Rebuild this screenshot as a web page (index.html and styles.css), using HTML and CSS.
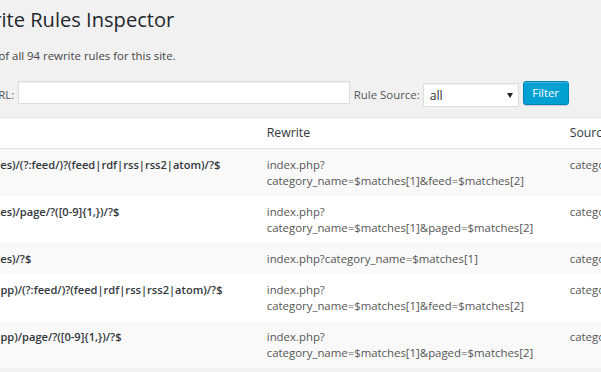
FILE: index.html
```html
<!DOCTYPE html>
<html>
<head>
<meta charset="utf-8">
<title>Rewrite Rules Inspector</title>
<link rel="stylesheet" href="styles.css">
</head>
<body>
<div class="wrap">
  <h1 class="title">Rewrite Rules Inspector</h1>
  <p class="desc">A listing of all 94 rewrite rules for this site.</p>
  <form class="filters">
    <label class="lbl" for="s">Match URL:</label>
    <input class="url" id="s" type="text">
    <label class="lbl lbl-source" for="src">Rule Source:</label>
    <span class="select-wrap">
      <select class="source" id="src"><option>all</option></select>
    </span>
    <button class="btn-primary" type="button">Filter</button>
  </form>
  <table class="rules">
    <colgroup><col class="c-rule"><col class="c-rewrite"><col class="c-source"></colgroup>
    <thead>
      <tr><th class="rule-h">Rule</th><th>Rewrite</th><th>Source</th></tr>
    </thead>
    <tbody>
      <tr class="alt"><td class="rule">^(movies)/(?:feed/)?(feed|rdf|rss|rss2|atom)/?$</td><td>index.php?<wbr>category_name=$matches[1]&amp;feed=$matches[2]</td><td>category</td></tr>
      <tr><td class="rule">^(movies)/page/?([0-9]{1,})/?$</td><td>index.php?<wbr>category_name=$matches[1]&amp;paged=$matches[2]</td><td>category</td></tr>
      <tr class="alt"><td class="rule">^(movies)/?$</td><td>index.php?<wbr>category_name=$matches[1]</td><td>category</td></tr>
      <tr><td class="rule">^(my-app)/(?:feed/)?(feed|rdf|rss|rss2|atom)/?$</td><td>index.php?<wbr>category_name=$matches[1]&amp;feed=$matches[2]</td><td>category</td></tr>
      <tr class="alt"><td class="rule">^(my-app)/page/?([0-9]{1,})/?$</td><td>index.php?<wbr>category_name=$matches[1]&amp;paged=$matches[2]</td><td>category</td></tr>
    </tbody>
  </table>
</div>
</body>
</html>
```

FILE: styles.css
```css
html, body {
  margin: 0;
  padding: 0;
}
body {
  background: #f1f1f1;
  font-family: "Open Sans", "Noto Sans", sans-serif;
  font-size: 11.4px;
  color: #444;
  overflow: hidden;
}
.wrap {
  margin-left: -46px;
  width: 860px;
}
.title {
  margin: 0;
  padding-top: 7px;
  font-size: 20.1px;
  font-weight: 400;
  line-height: 26.1px;
  color: #23282d;
}
.desc {
  margin: 14px 0 0;
  line-height: 17.1px;
  color: #444;
}
.filters {
  display: flex;
  align-items: flex-start;
  margin-top: 16px;
  height: 27px;
}
.lbl {
  margin-top: 8px;
  line-height: 14px;
  color: #555;
}
.url {
  margin: 1px 0 0 3.5px;
  width: 332px;
  height: 23px;
  box-sizing: border-box;
  border: 1px solid #ddd;
  box-shadow: inset 0 1px 2px rgba(0,0,0,.07);
  background: #fff;
  padding: 3px 5px;
  font: inherit;
}
.lbl-source {
  margin-left: 4px;
}
.select-wrap {
  position: relative;
  margin: 3px 0 0 3px;
}
.source {
  display: block;
  width: 96px;
  height: 24px;
  box-sizing: border-box;
  border: 1px solid #ddd;
  box-shadow: inset 0 1px 2px rgba(0,0,0,.07);
  background: #fff;
  padding: 0 6px;
  font-family: "Open Sans", sans-serif;
  font-size: 12.25px;
  color: #333;
  appearance: none;
  -webkit-appearance: none;
  border-radius: 0;
}
.select-wrap::after {
  content: "";
  position: absolute;
  right: 6px;
  top: 10px;
  border-left: 3px solid transparent;
  border-right: 3px solid transparent;
  border-top: 5px solid #222;
  pointer-events: none;
}
.btn-primary {
  margin: 1px 0 0 4px;
  width: 46px;
  height: 24px;
  box-sizing: border-box;
  padding: 0;
  background: #00a0d2;
  border: 1px solid #0085ba;
  border-radius: 3px;
  box-shadow: inset 0 1px 0 rgba(120,200,230,.5), 0 1px 0 rgba(0,0,0,.15);
  color: #fff;
  font-family: "Open Sans", sans-serif;
  font-size: 11.4px;
  line-height: 20px;
}
.rules {
  margin-top: 10px;
  width: 100%;
  table-layout: fixed;
  border-collapse: collapse;
  background: #fff;
  border-top: 1px solid #e5e5e5;
}
.c-rule { width: 304px; }
.c-rewrite { width: 303px; }
.rules th {
  text-align: left;
  font-weight: 400;
  font-size: 12.25px;
  line-height: 16px;
  padding: 7px 8.75px;
  color: #32373c;
  border-bottom: 1px solid #e1e1e1;
}
.rules td {
  padding: 7.5px 8.75px;
  line-height: 16px;
  vertical-align: top;
  color: #555;
}
.rules tr.alt td {
  background: #f9f9f9;
}
.rules td.rule {
  padding-left: 10px;
  font-size: 11.1px;
  font-weight: 600;
  color: #32373c;
  white-space: nowrap;
}
.rules th.rule-h {
  padding-left: 10px;
}
```
